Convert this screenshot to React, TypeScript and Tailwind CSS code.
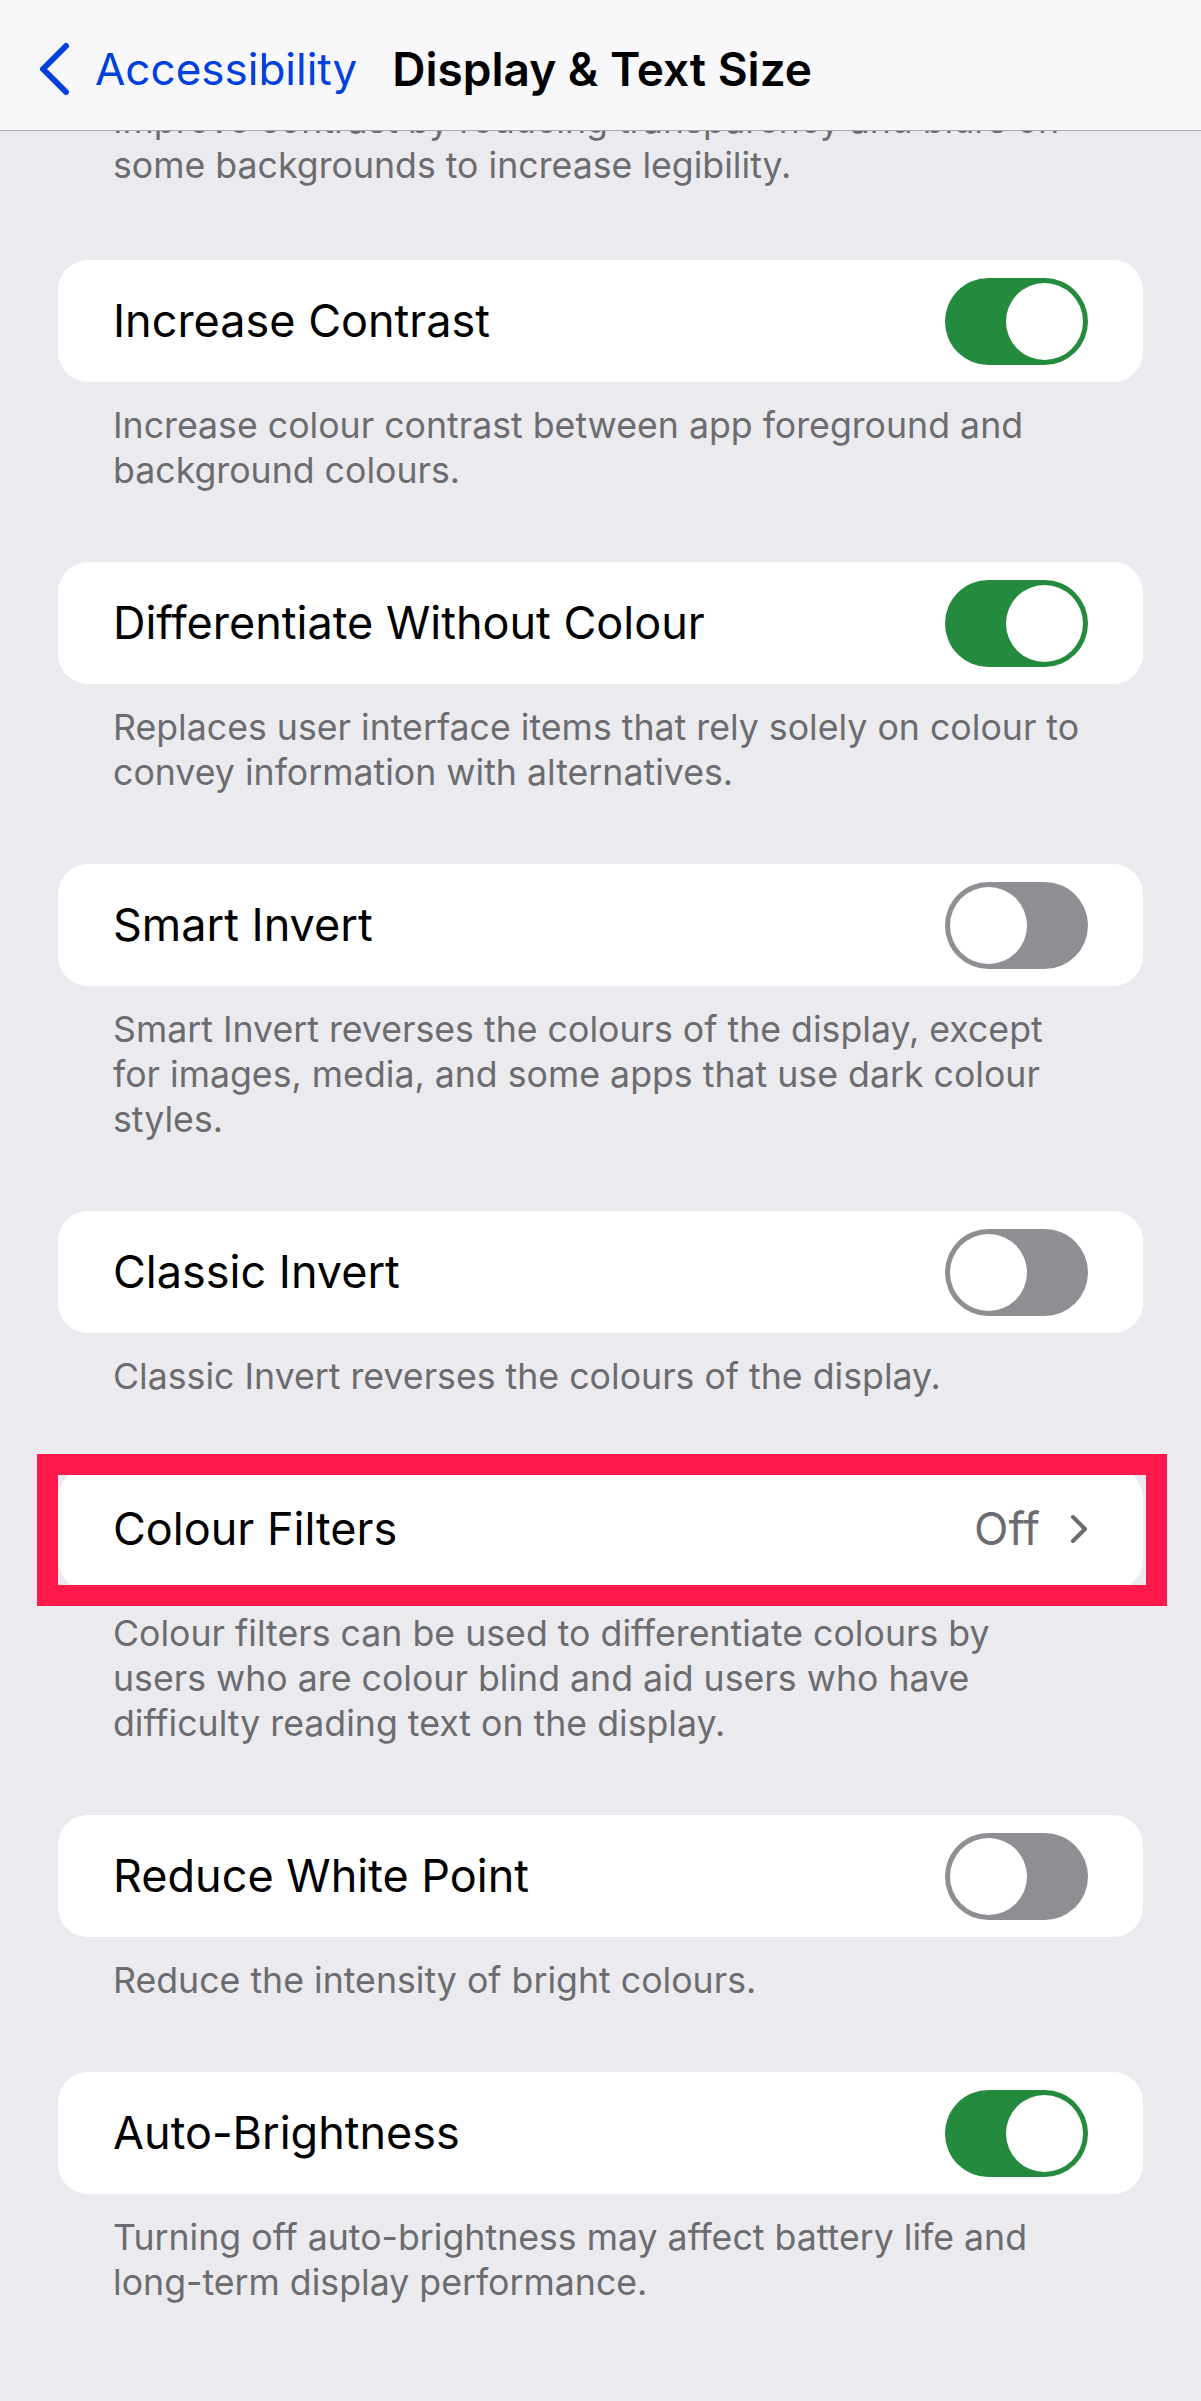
import { ReactNode } from 'react';

function Toggle({ on }: { on: boolean }) {
  return (
    <div
      className={`w-[143px] h-[87px] rounded-full p-[5px] flex shrink-0 ${
        on ? 'bg-[#248a3d] justify-end' : 'bg-[#8e8e93] justify-start'
      }`}
    >
      <div className="w-[77px] h-[77px] rounded-full bg-white" />
    </div>
  );
}

function Footer({ lines }: { lines: string[] }) {
  return (
    <div className="px-[113px] pt-[21px] pb-[69px] text-[35.7px] leading-[45px] text-[#6c6c70] whitespace-nowrap">
      {lines.map((l, i) => (
        <div key={i}>{l}</div>
      ))}
    </div>
  );
}

function Card({ title, right, highlight }: { title: string; right: ReactNode; highlight?: boolean }) {
  return (
    <div className="relative mx-[58px]">
      <div className="h-[122px] bg-white rounded-[30px] pl-[55px] pr-[55px] flex items-center justify-between">
        <span className="text-[45px] text-black">{title}</span>
        {right}
      </div>
      {/* red annotation box */}
      {highlight && (
        <div className="absolute left-[-21px] right-[-24px] top-[-14px] bottom-[-16px] border-[21px] border-[#ff1a4b]" />
      )}
    </div>
  );
}

const rows = [
  { title: 'Increase Contrast', on: true, footer: ['Increase colour contrast between app foreground and', 'background colours.'] },
  { title: 'Differentiate Without Colour', on: true, footer: ['Replaces user interface items that rely solely on colour to', 'convey information with alternatives.'] },
  { title: 'Smart Invert', on: false, footer: ['Smart Invert reverses the colours of the display, except', 'for images, media, and some apps that use dark colour', 'styles.'] },
  { title: 'Classic Invert', on: false, footer: ['Classic Invert reverses the colours of the display.'] },
];

const rows2 = [
  { title: 'Reduce White Point', on: false, footer: ['Reduce the intensity of bright colours.'] },
  { title: 'Auto-Brightness', on: true, footer: ['Turning off auto-brightness may affect battery life and', 'long-term display performance.'] },
];

export default function App() {
  return (
    <div className="min-h-[2401px] bg-[#eaeaef]" style={{ fontFamily: 'Inter, "Noto Sans", sans-serif' }}>
      {/* nav bar */}
      <div className="h-[131px] bg-[#f8f8fa] border-b border-[#a9a9ad] flex items-center pt-[8px]">
        <svg width="34" height="54" viewBox="0 0 34 54" className="ml-[37px] shrink-0">
          <path d="M29 4 L6 27 L29 50" fill="none" stroke="#0040dd" strokeWidth="6" strokeLinecap="round" strokeLinejoin="round" />
        </svg>
        <span className="ml-[24px] text-[44px] leading-[56px] text-[#0040dd]">Accessibility</span>
        <span className="ml-[35px] text-[46px] leading-[56px] font-semibold text-black">Display &amp; Text Size</span>
      </div>

      {/* previous section's footer, scrolled under the nav bar */}
      <div className="overflow-hidden">
        <div className="-mt-[33px] px-[113px] pb-[72px] text-[35.7px] leading-[45px] text-[#6c6c70] whitespace-nowrap">
          <div>Improve contrast by reducing transparency and blurs on</div>
          <div>some backgrounds to increase legibility.</div>
        </div>
      </div>

      {rows.map(r => (
        <div key={r.title}>
          <Card title={r.title} right={<Toggle on={r.on} />} />
          <Footer lines={r.footer} />
        </div>
      ))}

      <Card
        title="Colour Filters"
        highlight
        right={
          <div className="flex items-center gap-[30px]">
            <span className="text-[45px] text-[#6c6c70]">Off</span>
            <svg width="18" height="30" viewBox="0 0 18 30">
              <path d="M3 3 L15 15 L3 27" fill="none" stroke="#6c6c70" strokeWidth="4" strokeLinecap="round" strokeLinejoin="round" />
            </svg>
          </div>
        }
      />
      <Footer lines={['Colour filters can be used to differentiate colours by', 'users who are colour blind and aid users who have', 'difficulty reading text on the display.']} />

      {rows2.map(r => (
        <div key={r.title}>
          <Card title={r.title} right={<Toggle on={r.on} />} />
          <Footer lines={r.footer} />
        </div>
      ))}
    </div>
  );
}
